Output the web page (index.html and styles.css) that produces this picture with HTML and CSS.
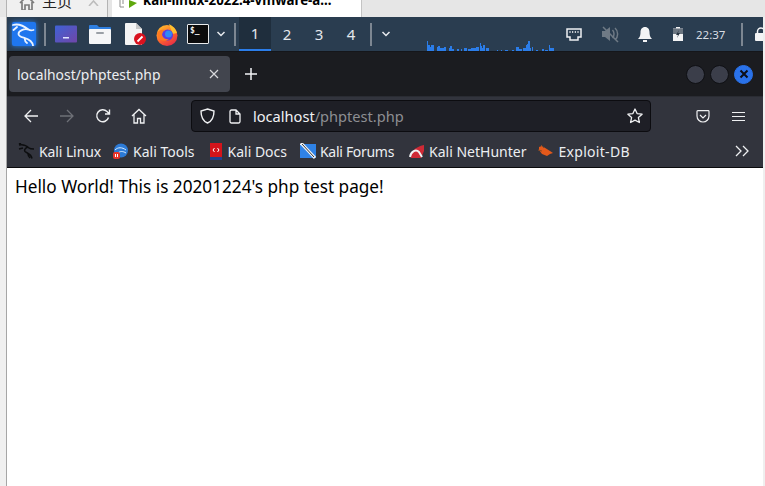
FILE: index.html
```html
<!DOCTYPE html>
<html lang="en">
<head>
<meta charset="utf-8">
<title>localhost/phptest.php</title>
<link rel="stylesheet" href="styles.css">
</head>
<body>
<div class="vm">
  <div class="vm-tabs">
    <div class="vm-tab vm-home">
      <svg class="vm-house" width="16" height="10" viewBox="0 0 16 10"><path d="M1 3 8-4l7 7M3 2v8h3V5h4v5h3V2" fill="none" stroke="#7d7d7d" stroke-width="1.700"/></svg>
      <span class="vm-home-label">主页</span>
      <svg class="vm-close" width="11" height="6" viewBox="0 0 11 6"><path d="M1 6 5.500 1 10 6" fill="none" stroke="#bdbdbd" stroke-width="1.600"/></svg>
    </div>
    <div class="vm-tab vm-active">
      <svg class="vm-play" width="18" height="10" viewBox="0 0 18 10"><path d="M1 0v7h4M4 0v4" fill="none" stroke="#8c8c8c"/><path d="M10 0l8 3-8 5Z" fill="#5fa80e"/></svg>
      <span class="vm-active-label">kali-linux-2022.4-vmware-a...</span>
    </div>
  </div>
  <div class="vm-body">
    <div class="vm-left"></div>
    <div class="guest">
      <div class="panel">
        <div class="kali-btn">
          <svg width="24" height="24" viewBox="0 0 24 24"><path d="M1 3C6 1.500 12 4 16.500 7.500c1.500 1 3 1 5 .5M16.500 7.500C12 6.500 6.500 8.500 6.500 12c0 4 8 3 12 7 1.500 1.500 2.500 3 2.500 4.500M13 16c-.5 2 .5 4 2 5M5 5 1.500 8" fill="none" stroke="#eaf3ff" stroke-width="1.800" stroke-linecap="round"/></svg>
        </div>
        <span class="divider div-a"></span>
        <svg class="launcher l-desk" width="22" height="18" viewBox="0 0 22 18"><defs><linearGradient id="dg" x1="0" y1="0" x2="1" y2="1"><stop offset="0" stop-color="#3f62d6"/><stop offset="1" stop-color="#7046a8"/></linearGradient></defs><rect width="22" height="17" y="0.500" rx="1" fill="url(#dg)"/><rect x="8" y="12" width="6" height="1.500" fill="#dfe5ff"/></svg>
        <svg class="launcher l-folder" width="22" height="20" viewBox="0 0 22 20"><path d="M0 2a1 1 0 0 1 1-1h7l2 2h11a1 1 0 0 1 1 1v4H0Z" fill="#2f7fe0"/><rect y="5" width="22" height="15" rx="1" fill="#f5f6f7"/><rect x="7" y="8" width="8" height="2" rx="1" fill="#9aa0a6"/></svg>
        <svg class="launcher l-file" width="21" height="22" viewBox="0 0 21 22"><path d="M0 1a1 1 0 0 1 1-1h10l6 6v16H1a1 1 0 0 1-1-1Z" fill="#f4f4f4"/><path d="M11 0l6 6h-6Z" fill="#c8c8c8"/><circle cx="15" cy="16" r="6" fill="#d9121f"/><path d="M12.500 18.500l5-5" stroke="#fff" stroke-width="1.800"/></svg>
        <svg class="launcher l-fox" width="22" height="23" viewBox="0 0 22 23"><defs><linearGradient id="fx" x1="0.200" y1="0" x2="0.800" y2="1"><stop offset="0" stop-color="#ffbd2e"/><stop offset="0.500" stop-color="#ff6a2b"/><stop offset="1" stop-color="#e3264a"/></linearGradient></defs><circle cx="11" cy="12.500" r="10.500" fill="url(#fx)"/><path d="M13 1c4 2 7 5 8 9l-5 1c0-4-2-6-3-10Z" fill="#ffc02e"/><circle cx="11.500" cy="12" r="5.500" fill="#5b3ce0"/><circle cx="12.500" cy="11" r="3.500" fill="#2f8af5"/><path d="M1 10c2-3 5-4 8-3-2 1-3 2-3 4 0 3 3 6 7 5-3 3-9 2-11-2Z" fill="#ff7a1f"/></svg>
        <div class="launcher l-term">$_</div>
        <svg class="chev l-chev" width="10" height="6" viewBox="0 0 10 6"><path d="M1.500 1l3.500 3.500L8.500 1" fill="none" stroke="#e8eaed" stroke-width="1.500"/></svg>
        <span class="divider div-b"></span>
        <div class="workspaces">
          <span class="ws ws-on">1</span><span class="ws">2</span><span class="ws">3</span><span class="ws">4</span>
        </div>
        <span class="divider div-c"></span>
        <svg class="chev l-chev2" width="10" height="6" viewBox="0 0 10 6"><path d="M1.500 1l3.500 3.500L8.500 1" fill="none" stroke="#e8eaed" stroke-width="1.500"/></svg>
        <svg class="graph" width="128" height="11" viewBox="427 40 128 11" shape-rendering="crispEdges"><path fill="#2b7de9" d="M427 41h1v10h-1ZM428 45h2v6h-2ZM430 47h1v4h-1ZM431 45h3v6h-3ZM437 47h1v4h-1ZM438 46h2v5h-2ZM440 48h4v3h-4ZM444 47h2v4h-2ZM449 48h1v3h-1ZM450 46h2v5h-2ZM452 49h2v2h-2ZM457 49h2v2h-2ZM461 49h1v2h-1ZM464 48h3v3h-3ZM468 49h3v2h-3ZM471 48h5v3h-5ZM476 47h3v4h-3ZM480 43h1v8h-1ZM481 46h1v5h-1ZM482 48h1v3h-1ZM483 45h2v6h-2ZM486 48h3v3h-3ZM497 50h1v1h-1ZM501 50h1v1h-1ZM505 50h3v1h-3ZM512 50h2v1h-2ZM516 47h3v4h-3ZM519 49h3v2h-3ZM523 48h3v3h-3ZM526 45h1v6h-1ZM527 44h1v7h-1ZM528 41h2v10h-2ZM530 48h1v3h-1ZM532 47h1v4h-1ZM536 50h2v1h-2ZM542 49h2v2h-2ZM545 50h3v1h-3ZM549 45h1v6h-1ZM550 48h4v3h-4Z"/></svg>
        <svg class="tray t-net" width="16" height="13" viewBox="0 0 16 13"><path d="M1 1h14v8h-3v3H4V9H1Z" fill="none" stroke="#eef0f2" stroke-width="1.500"/><path d="M4 3v2M6.700 3v2M9.300 3v2M12 3v2" stroke="#eef0f2"/></svg>
        <svg class="tray t-mute" width="19" height="17" viewBox="0 0 19 17"><path d="M1 5h3l5-4v14l-5-4H1Z" fill="#6f7a85"/><path d="M11.500 4c2 2 2 6 0 8M14 2c3.500 3 3.500 9 0 12M2 1l15 15" fill="none" stroke="#6f7a85" stroke-width="1.500"/></svg>
        <svg class="tray t-bell" width="14" height="15" viewBox="0 0 14 15"><path d="M7 0c3 0 4.500 2.500 4.500 5 0 3 .5 5 2.500 7H0c2-2 2.500-4 2.500-7C2.500 2.500 4 0 7 0Z" fill="#f3f4f5"/><rect x="5" y="13" width="4" height="2" fill="#f3f4f5"/></svg>
        <svg class="tray t-batt" width="10" height="14" viewBox="0 0 10 14"><path d="M3 0h4v1.500h3V14H0V1.500h3Z" fill="#f3f4f5"/><path d="M0 1.500h10V7H0Z" fill="#6a7580"/><path d="M6 3 3 8h2l-1 3 3-5H5Z" fill="#26323e"/></svg>
        <span class="clock">22:37</span>
        <span class="divider div-d"></span>
        <svg class="tray t-lock" width="10" height="14" viewBox="0 0 10 14"><path d="M2.500 7V4.500a3.500 3.500 0 0 1 7 0V7" fill="none" stroke="#f3f4f5" stroke-width="1.500"/><rect y="6" width="12" height="8" rx="1" fill="#f3f4f5"/></svg>
      </div>
      <div class="ff-tabs">
        <div class="ff-tab">
          <span class="ff-tab-title">localhost/phptest.php</span>
          <svg width="10" height="10" viewBox="0 0 10 10"><path d="M1 1l8 8M9 1 1 9" stroke="#d8d9dc" stroke-width="1.200"/></svg>
        </div>
        <svg class="ff-new" width="12" height="12" viewBox="0 0 12 12"><path d="M6 0v12M0 6h12" stroke="#f4f4f6" stroke-width="1.500"/></svg>
        <div class="win-btns">
          <span class="win-btn"></span>
          <span class="win-btn"></span>
          <span class="win-btn win-close"><svg width="10" height="10" viewBox="0 0 10 10"><path d="M1.500 1.500l7 7M8.500 1.500l-7 7" stroke="#0c0f18" stroke-width="2"/></svg></span>
        </div>
      </div>
      <div class="ff-nav">
        <svg class="nav-i" width="16" height="16" viewBox="0 0 16 16"><path d="M15 8H2M8 2 2 8l6 6" fill="none" stroke="#eff0f2" stroke-width="1.300"/></svg>
        <svg class="nav-i" width="16" height="16" viewBox="0 0 16 16"><path d="M1 8h13M8 2l6 6-6 6" fill="none" stroke="#6e7077" stroke-width="1.300"/></svg>
        <svg class="nav-i" width="16" height="16" viewBox="0 0 16 16"><path d="M13.500 9.500A6 6 0 1 1 12 3.500L14 5.500M14.500 1.500v4.500H10" fill="none" stroke="#eff0f2" stroke-width="1.400"/></svg>
        <svg class="nav-i" width="16" height="16" viewBox="0 0 16 16"><path d="M1 8l7-6.500L15 8M3 6.500V15h3.500v-4.500h3V15H13V6.500" fill="none" stroke="#eff0f2" stroke-width="1.300"/></svg>
        <div class="urlbar">
          <svg class="url-shield" width="15" height="16" viewBox="0 0 15 16"><path d="M7.500 1 14 3c0 6-1.500 10-6.500 12C2.500 13 1 9 1 3Z" fill="none" stroke="#eff0f2" stroke-width="1.400"/></svg>
          <svg class="url-page" width="12" height="15" viewBox="0 0 12 15"><path d="M1 2.500A1.500 1.500 0 0 1 2.500 1H7l4 4v7.500a1.500 1.500 0 0 1-1.500 1.500h-7A1.500 1.500 0 0 1 1 12.500ZM7 1v4h4" fill="none" stroke="#eff0f2" stroke-width="1.300"/></svg>
          <span class="url-text"><span class="url-host">localhost</span>/phptest.php</span>
          <svg class="url-star" width="16" height="16" viewBox="0 0 16 16"><path d="M8 1l2.100 4.600 5 .6-3.700 3.400 1 4.900L8 12.100l-4.400 2.400 1-4.900L.9 6.200l5-.6Z" fill="none" stroke="#eff0f2" stroke-width="1.300" stroke-linejoin="round"/></svg>
        </div>
        <svg class="nav-pocket" width="14" height="13" viewBox="0 0 14 13"><path d="M1 1.500A.8.800 0 0 1 1.800.7h10.400a.8.800 0 0 1 .8.800V6a6 6 0 0 1-12 0Z" fill="none" stroke="#eff0f2" stroke-width="1.200"/><path d="M4 5l3 3 3-3" fill="none" stroke="#eff0f2" stroke-width="1.200"/></svg>
        <svg class="nav-menu" width="13" height="11" viewBox="0 0 13 11"><path d="M0 1.500h13M0 5.500h13M0 9.500h13" stroke="#eff0f2" stroke-width="1.200"/></svg>
      </div>
      <div class="ff-bookmarks">
        <span class="bm bm-linux"><svg width="17" height="17" viewBox="0 0 17 17"><path d="M1 2c4-1 7 0 10 3 1 1 3 1 5 1M10 4C7 5 6 7 7 8.500c2 2 6 2 7 7M10 11c0 2 1 3 2 4M3 1 1 0M5 5 1 6" fill="none" stroke="#0d0e10" stroke-width="1.500"/></svg>Kali Linux</span>
        <span class="bm bm-tools"><svg width="16" height="17" viewBox="0 0 16 17"><circle cx="8" cy="7.500" r="7" fill="#2c7ad6"/><path d="M2 7c3-3 7-3 11 0M5 10c2-2 5-2 8 0" fill="none" stroke="#d9ecff"/><rect y="9" width="7" height="7" rx="2" fill="#e8332a"/><path d="M2.500 11v3M4.500 11v3" stroke="#fff"/></svg>Kali Tools</span>
        <span class="bm bm-docs"><svg width="14" height="17" viewBox="0 0 14 17"><rect x="1" width="12" height="15" fill="#d4141b"/><rect x="1" y="14" width="12" height="3" fill="#22408c"/><path d="M5.500 5 4 7l1.500 2M8.500 5 10 7 8.500 9" fill="none" stroke="#fff"/></svg>Kali Docs</span>
        <span class="bm bm-forums"><svg width="16" height="16" viewBox="0 0 16 16"><rect y="1" width="16" height="14" fill="#2f82e6"/><path d="M1 0 15 15" stroke="#f1f3f5" stroke-width="3"/><path d="M2 1 14 14" stroke="#30343a"/></svg>Kali Forums</span>
        <span class="bm bm-hunter"><svg width="16" height="16" viewBox="0 0 16 16"><path d="M2 15c0-7 4-11 13-13v6l-3 7Z" fill="#cf2a36"/><path d="M1 14c1-6 6-8 9-5l3 5" fill="none" stroke="#f1f3f5" stroke-width="2"/></svg>Kali NetHunter</span>
        <span class="bm bm-exploit"><svg width="15" height="12" viewBox="0 0 15 12"><path d="M1 2 4 1l8 5 3 2-3 1-3 2-5-2-3-4Z" fill="#e3591b"/><path d="M0 5l4 1M3 0l3 3" stroke="#8b4a25"/></svg>Exploit-DB</span>
        <svg class="bm-more" width="15" height="12" viewBox="0 0 15 12"><path d="M1 1l5 5-5 5M8 1l5 5-5 5" fill="none" stroke="#eff0f2" stroke-width="1.300"/></svg>
      </div>
      <div class="content">Hello World! This is 20201224's php test page!</div>
    </div>
    <div class="vm-right"></div>
  </div>
</div>
</body>
</html>
```
FILE: styles.css
```css
* { box-sizing: border-box; }
html, body { margin: 0; height: 100%; overflow: hidden; background: #fff; }
body { font-family: "Noto Sans", sans-serif; }
svg { display: block; flex: none; }

.vm { width: 765px; height: 486px; display: flex; flex-direction: column; }

.vm-tabs { height: 17px; flex: none; display: flex; padding-left: 6px; background: #e6e6e6; overflow: hidden; }
.vm-tab { height: 17px; display: flex; overflow: hidden; }
.vm-home { width: 102px; background: #f0f0f0; border-left: 1px solid #b4b4b4; border-right: 1px solid #b4b4b4; padding-left: 12px; }
.vm-house { margin-right: 7px; }
.vm-home-label { font: 15px/15px "Noto Sans CJK SC", sans-serif; margin-top: -7px; color: #222; width: 44px; }
.vm-close { margin-left: 2px; }
.vm-active { width: 250px; margin-left: 4px; background: #fff; border-right: 1px solid #c4c4c4; padding-left: 7px; }
.vm-play { margin-right: 6px; }
.vm-active-label { font: bold 13.300px/15px "Noto Sans", sans-serif; color: #000; margin-top: -7px; white-space: nowrap; }

.vm-body { flex: 1; display: flex; min-height: 0; }
.vm-left { width: 7px; flex: none; background: #f0f0f0; border-right: 1px solid #a6a6a6; }
.vm-right { width: 2px; flex: none; background: #efefef; }
.guest { flex: 1; min-width: 0; display: flex; flex-direction: column; background: #fff; }

.panel { height: 34px; flex: none; display: flex; align-items: center; background: #2a3d50; position: relative; overflow: hidden; }
.kali-btn { width: 24px; height: 24px; margin-left: 5px; display: flex; align-items: center; justify-content: center; background: #1f76ee; border-radius: 2px; box-shadow: 0 0 5px #2a7fe8; }
.divider { width: 2px; height: 23px; background: #7d8792; flex: none; }
.div-a { margin-left: 8px; }
.launcher { flex: none; }
.l-desk { margin-left: 9px; }
.l-folder { margin-left: 12px; }
.l-file { margin-left: 14px; }
.l-fox { margin-left: 10px; }
.l-term { margin-left: 9px; width: 22px; height: 20px; background: #0b0b0c; border: 1px solid #e8eaec; border-radius: 1px; color: #f2f2f2; font: bold 8px/12px "DejaVu Sans Mono", monospace; padding-left: 2px; }
.l-chev { margin-left: 7px; }
.div-b { margin-left: 8px; }
.workspaces { display: flex; margin-left: 3px; height: 34px; }
.ws { width: 32px; height: 34px; display: flex; align-items: center; justify-content: center; font-size: 15px; color: #e4e8ec; }
.ws-on { background: #1f2e3d; border-bottom: 2px solid #2b7de9; }
.div-c { margin-left: 3px; }
.l-chev2 { margin-left: 9px; }
.graph { margin-left: 36px; align-self: flex-end; }
.t-net { margin-left: 11px; }
.t-mute { margin-left: 19px; }
.t-bell { margin-left: 18px; }
.t-batt { margin-left: 21px; }
.clock { margin-left: 13px; width: 33px; font-size: 11.500px; color: #d9dee3; white-space: nowrap; flex: none; }
.div-d { margin-left: 12px; }
.t-lock { margin-left: 12px; }

.ff-tabs { height: 45px; flex: none; display: flex; align-items: center; background: #1b1c20; border-top: 1px solid #15161a; padding-left: 2px; }
.ff-tab { width: 221px; height: 36px; display: flex; align-items: center; justify-content: space-between; padding: 0 11px 0 8px; background: #42454e; border-radius: 4px; }
.ff-tab-title { font-size: 13.900px; color: #eceef1; }
.ff-new { margin-left: 15px; }
.win-btns { margin-left: auto; margin-right: 10px; display: flex; gap: 5px; }
.win-btn { width: 19px; height: 19px; border-radius: 50%; background: #3b3e4a; border: 1px solid #0f1014; display: flex; align-items: center; justify-content: center; }
.win-close { background: #2a72ea; border-color: #2a72ea; }

.ff-nav { height: 39px; flex: none; display: flex; align-items: center; background: #32343d; border-top: 1px solid #2a2c33; padding-left: 16px; }
.nav-i { margin-right: 20px; }
.urlbar { width: 460px; height: 32px; margin-left: 24px; display: flex; align-items: center; background: #1e1f26; border: 1px solid #0c0c10; border-radius: 4px; padding-left: 8px; }
.url-page { margin-left: 14px; }
.url-text { margin-left: 12px; font-size: 14.600px; color: #8d8e93; flex: 1; white-space: nowrap; }
.url-host { color: #f1f2f4; }
.url-star { margin-right: 7px; }
.nav-pocket { margin-left: 45px; }
.nav-menu { margin-left: 22px; }

.ff-bookmarks { height: 33px; flex: none; display: flex; align-items: center; background: #32343d; border-bottom: 1px solid #0b0b0d; padding-left: 11px; }
.bm { display: flex; align-items: center; gap: 4px; font-size: 14px; color: #eceef1; white-space: nowrap; }
.bm-linux { margin-right: 12px; letter-spacing: -0.100px; }
.bm-tools { margin-right: 14px; }
.bm-docs { margin-right: 13px; gap: 5px; }
.bm-forums { margin-right: 15px; letter-spacing: -0.300px; }
.bm-hunter { margin-right: 12px; }
.bm-exploit { gap: 5px; letter-spacing: 0.300px; }
.bm-more { margin-left: auto; margin-right: 13px; }

.content { padding: 8px 8px; font-size: 17.200px; line-height: 22px; color: #000; }
```
